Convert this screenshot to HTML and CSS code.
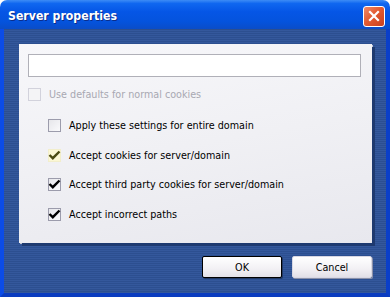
FILE: index.html
```html
<!DOCTYPE html>
<html lang="en">
<head>
    <meta charset="UTF-8">
    <title>Server properties</title>
    <link rel="stylesheet" href="styles.css">
</head>
<body>
    <div class="window">
        <div class="title-bar">
            <span class="title">Server properties</span>
            <button class="close-btn" aria-label="Close">
                <svg width="12" height="12" viewBox="0 0 12 12">
                    <path d="M2 2 L10 10 M10 2 L2 10" stroke="#fff" stroke-width="2.2" stroke-linecap="square"/>
                </svg>
            </button>
        </div>

        <div class="frame">
            <div class="panel">
                <input class="text-field" type="text">

                <label class="option disabled">
                    <span class="box"></span>
                    Use defaults for normal cookies
                </label>

                <div class="options">
                    <label class="option">
                        <span class="box"></span>
                        Apply these settings for entire domain
                    </label>
                    <label class="option">
                        <span class="box hover">
                            <svg width="15" height="15" viewBox="0 0 15 15"><path d="M2.5 7 L5.8 10.2 L12.5 3.5" fill="none" stroke="#4a4a12" stroke-width="2.4"/></svg>
                        </span>
                        Accept cookies for server/domain
                    </label>
                    <label class="option">
                        <span class="box">
                            <svg width="15" height="15" viewBox="0 0 15 15"><path d="M2.5 7 L5.8 10.2 L12.5 3.5" fill="none" stroke="#000" stroke-width="2.4"/></svg>
                        </span>
                        Accept third party cookies for server/domain
                    </label>
                    <label class="option">
                        <span class="box">
                            <svg width="15" height="15" viewBox="0 0 15 15"><path d="M2.5 7 L5.8 10.2 L12.5 3.5" fill="none" stroke="#000" stroke-width="2.4"/></svg>
                        </span>
                        Accept incorrect paths
                    </label>
                </div>
            </div>

            <div class="buttons">
                <button class="btn default">OK</button>
                <button class="btn">Cancel</button>
            </div>
        </div>
    </div>
</body>
</html>
```

FILE: styles.css
```css
* {
    box-sizing: border-box;
    margin: 0;
    padding: 0;
}

body {
    background-color: #fff;
    font-family: 'DejaVu Sans Condensed', 'Liberation Sans', sans-serif;
    font-size: 10.7px;
}

.window {
    width: 390px;
    height: 297px;
    display: flex;
    flex-direction: column;
}

.title-bar {
    height: 29px;
    display: flex;
    align-items: center;
    justify-content: space-between;
    padding: 3px 5px 0 8px;
    border-radius: 7px 7px 0 0;
    background: linear-gradient(to bottom, #3d8cf5 0%, #1067f0 12%, #0556e6 40%, #0453dd 75%, #0a4dc8 100%);
}

.title {
    color: #fff;
    font-family: 'DejaVu Sans Condensed', 'Liberation Sans', sans-serif;
    font-weight: bold;
    font-size: 12.2px;
    text-shadow: 1px 1px 0 #0b2d8a;
}

.close-btn {
    width: 22px;
    height: 21px;
    border: 1px solid #fff;
    border-radius: 3px;
    background: linear-gradient(135deg, #f08a6a 0%, #e35b32 45%, #c9401d 100%);
    display: flex;
    align-items: center;
    justify-content: center;
}

.frame {
    flex: 1;
    display: flex;
    flex-direction: column;
    border-left: 4px solid #0b4ce8;
    border-right: 4px solid #0a3fc8;
    border-bottom: 4px solid #0a3cc0;
    background: repeating-linear-gradient(to bottom, #2c4f90 0px, #2c4f90 1px, #34589c 1px, #34589c 2px);
    padding: 15px 14px 0 15px;
}

.panel {
    height: 199px;
    width: 353px;
    background: linear-gradient(170deg, #f7f7fa 0%, #f0f0f4 50%, #e8e8ee 100%);
    padding: 10px 11px 0 9px;
    box-shadow: 3px 3px 0 #1e3a70, 1px 1px 0 #c0c4d0;
}

.text-field {
    display: block;
    width: 333px;
    height: 23px;
    border: 1px solid #b0b0b8;
    background-color: #fff;
    margin-bottom: 11px;
}

.option {
    display: flex;
    align-items: center;
    gap: 8px;
    height: 13px;
    color: #000;
}

.option.disabled {
    color: #a8a8b2;
}

.options {
    display: flex;
    flex-direction: column;
    gap: 16.5px;
    padding-left: 20px;
    margin-top: 18px;
}

.box {
    width: 13px;
    height: 13px;
    flex-shrink: 0;
    border: 1px solid #9c9cac;
    background: linear-gradient(135deg, #e6e6ea 0%, #fafafc 100%);
    position: relative;
}

.box svg {
    position: absolute;
    left: -2px;
    top: -2px;
}

.disabled .box {
    border-color: #d2d2dc;
    background: #f4f4f6;
}

.box.hover {
    border-color: #f2eecc;
    background: #fbf7d4;
}

.buttons {
    display: flex;
    justify-content: flex-end;
    gap: 10px;
    margin-top: 13px;
    width: 353px;
}

.btn {
    width: 80px;
    height: 22px;
    font-family: 'DejaVu Sans Condensed', 'Liberation Sans', sans-serif;
    font-size: 10.7px;
    color: #000;
    border: 1px solid #d8d8e4;
    border-radius: 2px;
    background: linear-gradient(to bottom, #ffffff 0%, #f2f0f4 60%, #e2e0e8 100%);
    box-shadow: 1px 1px 0 #8a90a8;
}

.btn.default {
    border: 1px solid #000;
    box-shadow: 1px 1px 0 #203866;
}
```
